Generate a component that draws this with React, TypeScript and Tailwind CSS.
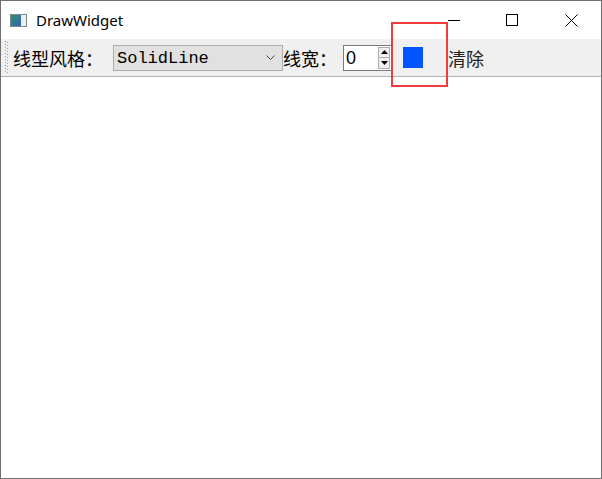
import React from "react";

function Grip() {
  const dots = [];
  for (let i = 0; i < 11; i++) {
    dots.push(<rect key={"a" + i} x={0} y={i * 3} width={1} height={1} fill="#a0a0a0" />);
    dots.push(<rect key={"b" + i} x={2} y={i * 3 + 1} width={1} height={1} fill="#a0a0a0" />);
  }
  return (
    <svg width="3" height="33" className="shrink-0">
      {dots}
    </svg>
  );
}

export default function App() {
  const cjk = { fontFamily: '"Noto Sans CJK SC", "Noto Sans", sans-serif' };
  return (
    <div className="relative w-[602px] h-[479px] border border-[#707070] bg-white flex flex-col overflow-hidden">
      {/* title bar */}
      <div className="h-[38px] flex items-center shrink-0">
        <div className="ml-[9px] w-[17px] h-[13px] border border-[#7a8a8a] flex">
          <div className="w-[10px] h-full bg-gradient-to-br from-[#2f8f6f] to-[#3a5fb0]" />
          <div className="flex-1 bg-[#e8f0f0]" />
        </div>
        <span className="ml-[9px] text-[15px] text-black" style={{ fontFamily: '"Noto Sans", sans-serif' }}>
          DrawWidget
        </span>
        <div className="flex-1" />
        <div className="w-[46px] h-[37px] flex items-center justify-center">
          <div className="w-[12px] h-px bg-black mt-[1px]" />
        </div>
        <div className="w-[12px]" />
        <div className="w-[46px] h-[37px] flex items-center justify-center">
          <div className="w-[12px] h-[12px] border border-black" />
        </div>
        <div className="w-[13px]" />
        <div className="w-[46px] h-[37px] flex items-center justify-center">
          <svg width="13" height="13" viewBox="0 0 13 13">
            <path d="M0.5 0.5 L12.5 12.5 M12.5 0.5 L0.5 12.5" stroke="black" strokeWidth="1" />
          </svg>
        </div>
        <div className="w-[7px]" />
      </div>
      {/* toolbar */}
      <div className="h-[38px] bg-[#f0f0f0] border-b border-[#b4b4b4] flex items-center shrink-0">
        <div className="ml-[4px]">
          <Grip />
        </div>
        <span className="ml-[5px] text-[18px] text-black leading-none" style={cjk}>
          线型风格：
        </span>
        <div className="ml-[10px] w-[170px] h-[26px] bg-[#e1e1e1] border border-[#adadad] flex items-center">
          <span className="ml-[3px] mt-[1px] text-[17px] text-black leading-none" style={{ fontFamily: '"Liberation Mono", monospace' }}>
            SolidLine
          </span>
          <div className="flex-1" />
          <svg width="9" height="6" viewBox="0 0 9 6" className="mr-[7px]">
            <path d="M0.5 0.5 L4.5 4.5 L8.5 0.5" stroke="#444" fill="none" strokeWidth="1" />
          </svg>
        </div>
        <span className="text-[18px] text-black leading-none" style={cjk}>
          线宽：
        </span>
        <div className="ml-[6px] w-[49px] h-[26px] bg-white border border-[#7a7a7a] flex items-center">
          <span className="ml-[2px] text-[18px] text-black leading-none" style={{ fontFamily: '"Liberation Sans", sans-serif' }}>
            0
          </span>
          <div className="flex-1" />
          <div className="flex flex-col mr-[1px]">
            <div className="w-[12px] h-[11px] border border-[#adadad] bg-[#f0f0f0] flex items-center justify-center">
              <svg width="7" height="4" viewBox="0 0 7 4">
                <path d="M0 4 L3.5 0 L7 4 Z" fill="black" />
              </svg>
            </div>
            <div className="w-[12px] h-[11px] border border-[#adadad] border-t-0 bg-[#f0f0f0] flex items-center justify-center">
              <svg width="7" height="4" viewBox="0 0 7 4">
                <path d="M0 0 L3.5 4 L7 0 Z" fill="black" />
              </svg>
            </div>
          </div>
        </div>
        <div className="ml-[11px] w-[20px] h-[21px] bg-[#0055ff]" />
        <span className="ml-[25px] text-[18px] text-[#222] leading-none" style={cjk}>
          清除
        </span>
      </div>
      <div className="flex-1 bg-white" />
      {/* red highlight box */}
      <div className="absolute left-[390px] top-[21px] w-[57px] h-[65px] border-2 border-[#f23b3b]" />
    </div>
  );
}
